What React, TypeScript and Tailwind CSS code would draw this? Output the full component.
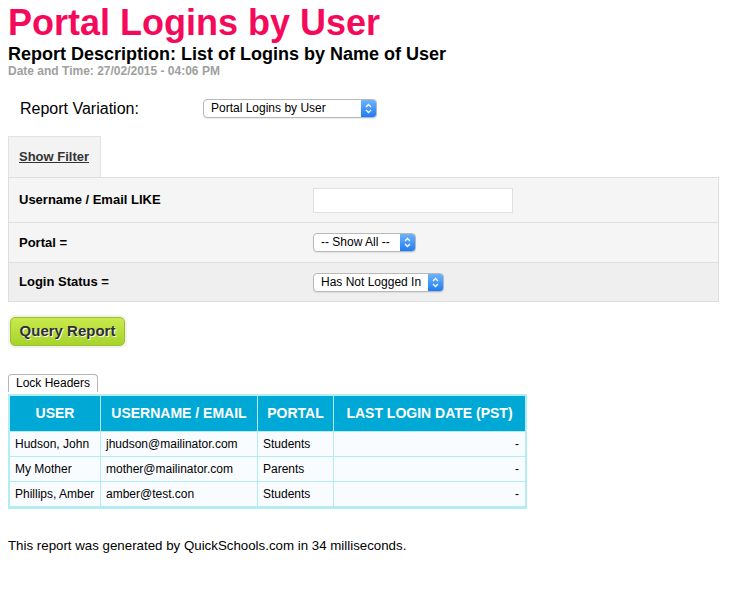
import React from "react";

function SelectBox({ label, width }: { label: string; width: string }) {
  return (
    <div
      className={`flex h-[19px] ${width} items-stretch rounded-[4px] border border-[#b9b9b9] bg-white shadow-[0_1px_1px_rgba(0,0,0,0.08)]`}
    >
      <span className="flex-1 truncate pl-[7px] text-[12px] font-normal leading-[17px] text-black">{label}</span>
      <span className="flex w-[15px] items-center justify-center rounded-r-[3px] bg-gradient-to-b from-[#6cb3fa] to-[#1a7cf5]">
        <svg width="7" height="11" viewBox="0 0 7 11" fill="none" stroke="white" strokeWidth="1.3">
          <path d="M1 4 L3.5 1.5 L6 4" />
          <path d="M1 7 L3.5 9.5 L6 7" />
        </svg>
      </span>
    </div>
  );
}

const rows = [
  { user: "Hudson, John", email: "jhudson@mailinator.com", portal: "Students" },
  { user: "My Mother", email: "mother@mailinator.com", portal: "Parents" },
  { user: "Phillips, Amber", email: "amber@test.con", portal: "Students" },
];

export default function App() {
  return (
    <div className="min-h-[592px] bg-white px-2 pt-[2px] font-['Liberation_Sans',Arial,sans-serif] text-black">
      <h1 className="text-[36px] font-bold leading-[42px] text-[#f5095a]">Portal Logins by User</h1>
      <h2 className="text-[18px] font-bold leading-[20px]">Report Description: List of Logins by Name of User</h2>
      <div className="text-[12px] font-bold leading-[15px] text-[#a0a0a0]">Date and Time: 27/02/2015 - 04:06 PM</div>

      <div className="mt-[20px] flex items-center pl-3">
        <span className="w-[183px] text-[16px] leading-[19px]">Report Variation:</span>
        <SelectBox label="Portal Logins by User" width="w-[174px]" />
      </div>

      <div className="mt-[18px] flex h-[41px] w-[93px] items-center border border-b-0 border-[#e2e2e2] bg-[#f3f3f3] pl-[10px]">
        <span className="text-[13px] font-bold leading-[16px] text-[#333] underline">Show Filter</span>
      </div>
      <div className="w-[711px] border border-[#dedede] text-[13px] font-bold">
        <div className="flex h-[45px] items-center border-b border-[#e0e0e0] bg-[#f5f5f5]">
          <span className="w-[304px] pl-[10px]">Username / Email LIKE</span>
          <div className="h-[25px] w-[200px] border border-[#e0e0e0] bg-white" />
        </div>
        <div className="flex h-[40px] items-center border-b border-[#e0e0e0] bg-[#f5f5f5]">
          <span className="w-[304px] pl-[10px]">Portal =</span>
          <SelectBox label="-- Show All --" width="w-[103px]" />
        </div>
        <div className="flex h-[38px] items-center bg-[#efefef]">
          <span className="w-[304px] pl-[10px]">Login Status =</span>
          <SelectBox label="Has Not Logged In" width="w-[131px]" />
        </div>
      </div>

      <div className="mt-[13px] inline-block rounded-[7px] bg-[#f1f1f1] p-[2px]">
        <button className="h-[29px] w-[115px] rounded-[5px] border border-[#9fbf2a] bg-gradient-to-b from-[#c9ea4c] to-[#a6d42a] text-[15px] font-bold text-[#2f2f2f] [text-shadow:1px_1px_0_#fff]">
          Query Report
        </button>
      </div>

      <div className="mt-[22px]">
        <button className="h-[18px] rounded-t-[4px] border border-b-0 border-[#b5b5b5] bg-white px-[7px] text-[12px] leading-[16px]">
          Lock Headers
        </button>
      </div>
      <table className="border-separate border-spacing-0 border-2 border-b-[3px] border-[#b4ecf3] text-[12px]">
        <thead>
          <tr className="bg-[#00a9d5] text-[14px] font-bold uppercase text-white">
            <th className="h-[35px] w-[91px] border-r border-[#b4ecf3] text-center">User</th>
            <th className="w-[157px] border-r border-[#b4ecf3] text-center">Username / Email</th>
            <th className="w-[76px] border-r border-[#b4ecf3] text-center">Portal</th>
            <th className="w-[191px] px-[9px] text-center">Last Login Date (PST)</th>
          </tr>
        </thead>
        <tbody>
          {rows.map((r) => (
            <tr key={r.email} className="bg-[#f9fcff]">
              <td className="h-[25px] border-r border-t border-[#b4ecf3] pl-[5px]">{r.user}</td>
              <td className="border-r border-t border-[#b4ecf3] pl-[5px]">{r.email}</td>
              <td className="border-r border-t border-[#b4ecf3] pl-[5px]">{r.portal}</td>
              <td className="border-t border-[#b4ecf3] pr-[6px] text-right">-</td>
            </tr>
          ))}
        </tbody>
      </table>

      <p className="mt-[29px] text-[13.3px] leading-[16px]">This report was generated by QuickSchools.com in 34 milliseconds.</p>
    </div>
  );
}
